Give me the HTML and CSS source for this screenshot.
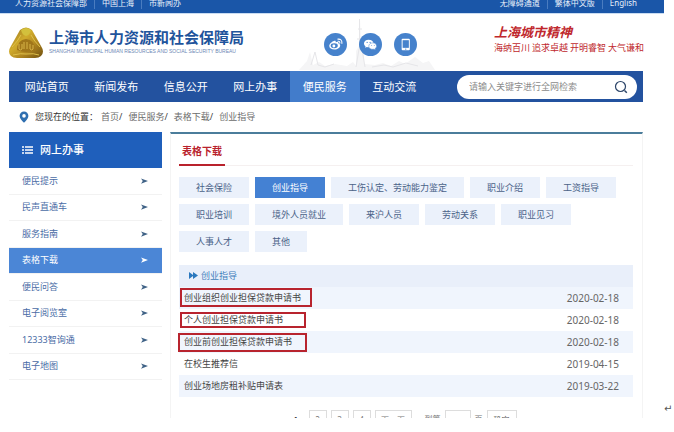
FILE: index.html
```html
<!DOCTYPE html>
<html lang="zh-CN">
<head>
<meta charset="utf-8">
<meta name="viewport" content="width=device-width, initial-scale=1">
<title>表格下载</title>
<link rel="stylesheet" href="styles.css">
</head>
<body>
<div class="document">
<div class="site">
  <div class="topbar">
    <div class="topbar-links">
      <a href="#">人力资源社会保障部</a><a href="#">中国上海</a><a href="#">市新闻办</a>
    </div>
    <div class="topbar-links">
      <a href="#">无障碍通道</a><a href="#">繁体中文版</a><a href="#">English</a>
    </div>
  </div>

  <header class="header">
    <a class="brand" href="#">
      <svg class="emblem" viewBox="0 0 34 32" aria-hidden="true">
        <defs>
          <linearGradient id="gold" x1="0" y1="0" x2="1" y2="1">
            <stop offset="0" stop-color="#94701c"/>
            <stop offset=".4" stop-color="#d0ab2c"/>
            <stop offset=".65" stop-color="#b08620"/>
            <stop offset="1" stop-color="#70500f"/>
          </linearGradient>
        </defs>
        <path d="M11 3Q17-2 23 3L32 19Q36 25 32 29Q30 31 26 31H8Q4 31 2 29Q-2 25 2 19Z" fill="url(#gold)"/>
        <path d="M12 3Q17-1 22 3Q21 8 17 9Q13 8 12 3Z" fill="#d3c03c"/>
        <path d="M3 20Q9 14 12 8M31 20Q25 14 22 8M4 28Q12 26 17 27Q25 26 30 28" fill="none" stroke="#dfc14b" stroke-width="1"/>
        <path d="M8 23Q8 13 17 12Q26 13 26 23Q17 27 8 23Z" fill="#a0761a"/>
        <path d="M10 17v5q1 2 3 0v-5M15 15v7M18 15v7M21 17v5q2 2 3 0v-4" fill="none" stroke="#d8b548" stroke-width="1"/>
      </svg>
      <span class="brand-text">
        <span class="brand-name">上海市人力资源和社会保障局</span>
        <span class="brand-sub">SHANGHAI MUNICIPAL HUMAN RESOURCES AND SOCIAL SECURITY BUREAU</span>
      </span>
    </a>

    <div class="social">
      <svg class="skyline" viewBox="0 0 136 56" aria-hidden="true">
        <path d="M0 55L8 46L11 37L14 50L20 47L26 51L36 49L48 51L54 47L57 51V36L60 31L61 3L62 31L65 36V49L76 50L84 48L92 51L100 46L106 49L116 42L124 48L130 46L136 55Z" fill="#f5f5f6"/>
        <path d="M12 50l4-13 3 13 7 2 9-3M59 14h4M58 24h6M60.500 4v28M57 52l3-18h3l3 18M73 52l12-2 9 2 13-4 12 3" fill="none" stroke="#e6e6e9" stroke-width="1"/>
      </svg>
      <a class="social-link" href="#" aria-label="微博">
        <svg viewBox="0 0 24 24" aria-hidden="true">
          <path d="M10.400 8.300c1.300-.5 2.200 0 1.800 1.300 2-.7 3.400-.1 2.900 1.400 1.100.3 1.800 1 1.800 2 0 2.200-2.700 4.200-5.900 4.200-3.100 0-5.500-1.500-5.500-3.600 0-2 2.400-4.600 4.900-5.300z" fill="#fff"/>
          <ellipse cx="10.700" cy="13.300" rx="3.700" ry="2.500" fill="#4682cc"/>
          <circle cx="10.300" cy="13.500" r="1.500" fill="#fff"/>
          <path d="M14.500 8.600q2.300-.3 2 2M14.500 6.400q4.500-.4 4.200 4.400" fill="none" stroke="#fff" stroke-width="1.100" stroke-linecap="round"/>
        </svg>
      </a>
      <a class="social-link" href="#" aria-label="微信">
        <svg viewBox="0 0 24 24" aria-hidden="true">
          <path d="M10 7c-2.800 0-4.800 1.700-4.800 3.900 0 1.200.6 2.200 1.600 2.900l-.4 1.600 1.800-.9c4.200 1 6.900-1.200 6.900-3.700C15.100 8.600 12.900 7 10 7z" fill="#fff"/>
          <path d="M14.500 10.300c-2.500 0-4.300 1.500-4.300 3.400 0 2.200 2.500 3.900 5.400 3.200l1.500.8-.4-1.400c1-.7 1.700-1.600 1.700-2.600 0-1.900-1.700-3.400-3.900-3.400z" fill="#fff" stroke="#4682cc" stroke-width=".5"/>
          <circle cx="8.500" cy="9.800" r=".6" fill="#4682cc"/><circle cx="11.600" cy="9.800" r=".6" fill="#4682cc"/>
          <circle cx="13.200" cy="13" r=".5" fill="#4682cc"/><circle cx="15.900" cy="13" r=".5" fill="#4682cc"/>
        </svg>
      </a>
      <a class="social-link" href="#" aria-label="手机版">
        <svg viewBox="0 0 24 24" aria-hidden="true">
          <rect x="8" y="6" width="8.500" height="12" rx="1" fill="#fff"/>
          <rect x="9" y="7.500" width="6.500" height="8" fill="#4682cc"/>
          <circle cx="12.250" cy="16.800" r=".7" fill="#4682cc"/>
        </svg>
      </a>
    </div>

    <div class="spirit">
      <strong class="spirit-title">上海城市精神</strong>
      <div class="spirit-words"><span>海纳百川</span><span>追求卓越</span><span>开明睿智</span><span>大气谦和</span></div>
    </div>
  </header>

  <nav class="nav">
    <ul class="nav-list">
      <li><a href="#">网站首页</a></li>
      <li><a href="#">新闻发布</a></li>
      <li><a href="#">信息公开</a></li>
      <li><a href="#">网上办事</a></li>
      <li><a class="current" href="#">便民服务</a></li>
      <li><a href="#">互动交流</a></li>
    </ul>
    <form class="search">
      <input type="text" aria-label="全网检索" placeholder="请输入关键字进行全网检索">
      <button type="button" aria-label="搜索">
        <svg viewBox="0 0 14 14" aria-hidden="true"><circle cx="6.500" cy="6.500" r="5" fill="none" stroke="#2b4468" stroke-width="1.200"/><path d="M10.500 10.500l2.300 2.300" stroke="#2b4468" stroke-width="1.500"/></svg>
      </button>
    </form>
  </nav>

  <div class="breadcrumb">
    <svg class="pin" viewBox="0 0 10 12" aria-hidden="true"><path fill-rule="evenodd" d="M5 .5a4.400 4.400 0 0 0-4.400 4.400C.6 7.500 3 9.500 5 11.700 7 9.500 9.400 7.500 9.400 4.900A4.400 4.400 0 0 0 5 .5zM5 3.100a1.800 1.800 0 1 1 0 3.600 1.800 1.800 0 0 1 0-3.600z" fill="#2f6fb0"/></svg>
    <span class="breadcrumb-label">您现在的位置：</span>
    <span><a href="#">首页</a>/</span>
    <span><a href="#">便民服务</a>/</span>
    <span><a href="#">表格下载</a>/</span>
    <a href="#">创业指导</a>
  </div>

  <div class="columns">
    <aside class="sidebar">
      <h2 class="sidebar-title">
        <svg viewBox="0 0 11 8" aria-hidden="true"><path d="M0 1h2M3 1h8M0 4h2M3 4h8M0 7h2M3 7h8" stroke="#fff" stroke-width="1.600"/></svg>
        网上办事
      </h2>
      <ul class="menu">
        <li><a href="#">便民提示<svg viewBox="0 0 8 6" aria-hidden="true"><path d="M0 0L8 3L0 6L2 3Z"/></svg></a></li>
        <li><a href="#">民声直通车<svg viewBox="0 0 8 6" aria-hidden="true"><path d="M0 0L8 3L0 6L2 3Z"/></svg></a></li>
        <li><a href="#">服务指南<svg viewBox="0 0 8 6" aria-hidden="true"><path d="M0 0L8 3L0 6L2 3Z"/></svg></a></li>
        <li><a class="current" href="#">表格下载<svg viewBox="0 0 8 6" aria-hidden="true"><path d="M0 0L8 3L0 6L2 3Z"/></svg></a></li>
        <li><a href="#">便民问答<svg viewBox="0 0 8 6" aria-hidden="true"><path d="M0 0L8 3L0 6L2 3Z"/></svg></a></li>
        <li><a href="#">电子阅览室<svg viewBox="0 0 8 6" aria-hidden="true"><path d="M0 0L8 3L0 6L2 3Z"/></svg></a></li>
        <li><a href="#">12333智询通<svg viewBox="0 0 8 6" aria-hidden="true"><path d="M0 0L8 3L0 6L2 3Z"/></svg></a></li>
        <li><a href="#">电子地图<svg viewBox="0 0 8 6" aria-hidden="true"><path d="M0 0L8 3L0 6L2 3Z"/></svg></a></li>
      </ul>
    </aside>

    <main class="panel">
      <div class="panel-head"><h1>表格下载</h1></div>
      <div class="categories">
        <a href="#">社会保险</a>
        <a class="current" href="#">创业指导</a>
        <a href="#">工伤认定、劳动能力鉴定</a>
        <a href="#">职业介绍</a>
        <a href="#">工资指导</a>
        <a href="#">职业培训</a>
        <a href="#">境外人员就业</a>
        <a href="#">来沪人员</a>
        <a href="#">劳动关系</a>
        <a href="#">职业见习</a>
        <a href="#">人事人才</a>
        <a href="#">其他</a>
      </div>
      <table class="forms">
        <thead>
          <tr><th colspan="2" scope="colgroup"><svg viewBox="0 0 9 7" aria-hidden="true"><path d="M0 0L4 3V0L9 3.500L4 7V4L0 7Z" fill="#2b78be"/></svg>创业指导</th></tr>
        </thead>
        <tbody>
          <tr><td><a class="marked" href="#">创业组织创业担保贷款申请书</a></td><td>2020-02-18</td></tr>
          <tr><td><a class="marked marked-slim" href="#">个人创业担保贷款申请书</a></td><td>2020-02-18</td></tr>
          <tr><td><a class="marked marked-wide" href="#">创业前创业担保贷款申请书</a></td><td>2020-02-18</td></tr>
          <tr><td><a href="#">在校生推荐信</a></td><td>2019-04-15</td></tr>
          <tr><td><a href="#">创业场地房租补贴申请表</a></td><td>2019-03-22</td></tr>
        </tbody>
      </table>
      <div class="pager">
        <strong>1</strong>
        <a href="#">2</a>
        <a href="#">3</a>
        <a href="#">4</a>
        <a class="pager-next" href="#">下一页</a>
        <label for="page-number">到第</label>
        <input id="page-number" type="text">
        <span>页</span>
        <button type="button">确定</button>
      </div>
    </main>
  </div>
</div>
<span class="return-mark">↵</span>
</div>
</body>
</html>
```
FILE: styles.css
```css
* {
  box-sizing: border-box;
}

body {
  margin: 0;
  background: #fff;
  color: #444;
  font: 9px/14px "Noto Sans", "Noto Sans CJK SC", sans-serif;
}

a {
  color: inherit;
  text-decoration: none;
}

ul {
  margin: 0;
  padding: 0;
  list-style: none;
}

svg {
  display: block;
  flex: none;
}

.document {
  display: flex;
  align-items: flex-end;
}

.site {
  flex: 1;
  min-width: 0;
}

.return-mark {
  width: 10px;
  padding-bottom: 2px;
  color: #555;
  font: 10px/14px "DejaVu Sans", sans-serif;
}

/* Top strip */
.topbar {
  display: flex;
  justify-content: space-between;
  align-items: flex-end;
  height: 14px;
  padding: 0 20px 4px 8px;
  overflow: hidden;
  border-bottom: 1px solid #c9dcf2;
  background: #1a56a8;
  color: #e8f0fa;
  font-size: 8px;
  line-height: 12px;
}

.topbar-links {
  display: flex;
}

.topbar-links a {
  padding: 0 7px;
}

.topbar-links a + a {
  border-left: 1px solid #4a7cc0;
}

/* Header */
.header {
  display: flex;
  justify-content: space-between;
  align-items: center;
  height: 57px;
  padding: 0 20px 0 9px;
}

.brand {
  display: flex;
  align-items: center;
  gap: 6px;
}

.emblem {
  width: 34px;
  height: 32px;
}

.brand-text {
  display: flex;
  flex-direction: column;
  padding-bottom: 3px;
}

.brand-name {
  color: #1f549c;
  font-size: 15px;
  font-weight: 700;
  line-height: 20px;
}

.brand-sub {
  color: #6d88b5;
  font: 5px/8px "Liberation Sans", sans-serif;
}

.social {
  position: relative;
  display: flex;
  gap: 12px;
  margin: 3px 0 0 4px;
}

.skyline {
  position: absolute;
  top: -18px;
  left: -25px;
  width: 136px;
  height: 56px;
}

.social-link {
  position: relative;
  width: 23px;
  height: 23px;
  border-radius: 50%;
  background: #4682cc;
}

.spirit {
  display: flex;
  flex-direction: column;
  padding-bottom: 7px;
  color: #c0282d;
}

.spirit-title {
  font-size: 13px;
  font-style: italic;
  line-height: 18px;
}

.spirit-words {
  display: flex;
  gap: 2px;
}

/* Navigation */
.nav {
  display: flex;
  align-items: center;
  height: 31px;
  margin: 0 21px 0 9px;
  padding: 0 6px 0 3px;
  background: #23529f;
}

.nav-list {
  display: grid;
  flex: 1;
  grid-template-columns: repeat(6, 1fr);
}

.nav-list a {
  display: block;
  color: #fff;
  font-size: 11px;
  line-height: 31px;
  text-align: center;
}

.nav-list .current {
  background: #427ccb;
}

.search {
  display: flex;
  align-items: center;
  width: 180px;
  height: 24px;
  margin-left: 28px;
  padding: 0 9px 0 12px;
  border-radius: 12px;
  background: #fff;
}

.search input {
  flex: 1;
  min-width: 0;
  padding: 0;
  border: 0;
  outline: 0;
  background: none;
  font: inherit;
}

.search input::placeholder {
  color: #8c8c8c;
}

.search button {
  padding: 0;
  border: 0;
  background: none;
}

.search svg {
  width: 14px;
  height: 14px;
}

/* Breadcrumb */
.breadcrumb {
  display: flex;
  align-items: center;
  gap: 6px;
  height: 30px;
  padding-left: 19px;
}

.breadcrumb a {
  color: #6c6c6c;
}

.breadcrumb-label {
  color: #333;
  margin-right: -3px;
}

.pin {
  width: 10px;
  height: 12px;
}

/* Two columns */
.columns {
  display: flex;
  align-items: flex-start;
  gap: 8px;
  padding: 0 21px 0 9px;
}

.sidebar {
  flex: none;
  width: 153px;
}

.sidebar-title {
  display: flex;
  align-items: center;
  gap: 7px;
  height: 36px;
  margin: 0;
  padding-left: 13px;
  background: #1f5fbb;
  color: #fff;
  font-size: 11px;
  font-weight: 500;
}

.sidebar-title svg {
  width: 11px;
  height: 8px;
}

.menu {
  display: grid;
  grid-auto-rows: 1fr;
  min-height: 212px;
}

.menu li {
  display: grid;
  border-bottom: 1px solid #f2f2f2;
}

.menu a {
  display: flex;
  justify-content: space-between;
  align-items: center;
  padding: 0 14px 0 13px;
  color: #4a6ca6;
}

.menu svg {
  width: 7px;
  height: 6px;
  fill: #3f6286;
}

.menu .current {
  background: #4b86d6;
  color: #fff;
}

.menu .current svg {
  fill: #fff;
}

.panel {
  flex: 1;
  min-width: 0;
  padding: 0 9px 0 8px;
  border: 1px solid #f4f4f4;
  border-top: 2px solid #4b7d9b;
  border-bottom: 0;
}

.panel-head {
  display: flex;
  border-bottom: 1px solid #f5f0f0;
}

.panel-head h1 {
  margin: 0 0 -1px;
  padding: 7px 3px 2px;
  border-bottom: 2px solid #b9222c;
  color: #b9222c;
  font-size: 10px;
  font-weight: 700;
  line-height: 21px;
}

.categories {
  display: flex;
  flex-wrap: wrap;
  gap: 6px;
  padding: 11px 0 13px;
}

.categories a {
  padding: 0 17px;
  background: #ebf1fb;
  color: #4a6288;
  line-height: 21px;
}

.categories .current {
  background: #4481d3;
  color: #fff;
}

/* Form list */
.forms {
  width: 100%;
  border-collapse: collapse;
}

.forms th,
.forms td {
  height: 22px;
  padding: 0 14px 0 5px;
  text-align: left;
}

.forms th {
  padding-left: 10px;
  background: #e9effa;
  color: #3f7dbb;
  font-weight: 400;
}

.forms th svg {
  display: inline-block;
  width: 9px;
  height: 7px;
  margin-right: 3px;
}

.forms tbody tr:nth-child(odd) {
  background: #f0f5fd;
}

.forms td:last-child {
  color: #666;
  font-size: 10px;
  text-align: right;
}

/* Red frames drawn over the highlighted entries */
.marked {
  position: relative;
}

.marked::after {
  position: absolute;
  inset: -3px -11px -3px -4px;
  border: 2px solid #b8242e;
  content: "";
}

.marked-slim::after {
  inset: -1px -23px -2px -4px;
}

.marked-wide::after {
  inset: -2px -15px -4px -6px;
}

/* Pager, cut off by the lower edge of the sheet */
.pager {
  display: flex;
  justify-content: center;
  gap: 4px;
  height: 21px;
  padding: 13px 9px 0 0;
  overflow: hidden;
  color: #777;
  font-size: 8px;
  line-height: 18px;
}

.pager strong,
.pager a {
  flex: none;
  width: 18px;
  height: 20px;
  border: 1px solid #ddd;
  text-align: center;
}

.pager strong {
  border-color: transparent;
  color: #333;
}

.pager .pager-next {
  width: 37px;
}

.pager label {
  margin-left: 9px;
}

.pager input {
  width: 26px;
  height: 20px;
  padding: 0;
  border: 1px solid #ddd;
}

.pager button {
  width: 30px;
  height: 20px;
  padding: 0;
  border: 1px solid #ddd;
  background: #fff;
  color: #555;
  font: inherit;
}
```
